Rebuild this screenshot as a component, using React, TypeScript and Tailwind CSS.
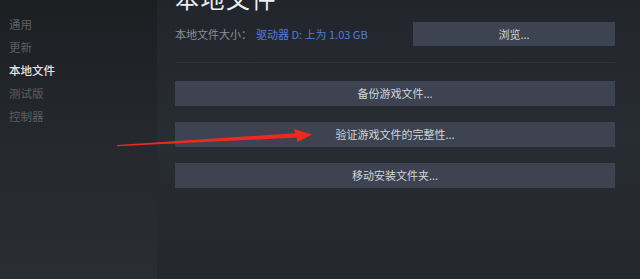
import React from "react";

const navItems = [
  { label: "通用", active: false },
  { label: "更新", active: false },
  { label: "本地文件", active: true },
  { label: "测试版", active: false },
  { label: "控制器", active: false },
];

const actions = ["备份游戏文件...", "验证游戏文件的完整性...", "移动安装文件夹..."];

const font = { fontFamily: '"Noto Sans CJK SC", "Noto Sans", sans-serif' };

function Arrow() {
  return (
    <svg className="absolute left-0 top-0 pointer-events-none" width="640" height="279" viewBox="0 0 640 279">
      <polygon
        points="117,145 295,133.2 294,129 312,134.6 297.5,142 296.5,137.6 117,146.2"
        fill="#ee2a1e"
      />
    </svg>
  );
}

export default function App() {
  return (
    <div className="relative flex w-[640px] h-[279px] overflow-hidden" style={font}>
      <aside className="w-[157px] shrink-0 pt-[13px] pl-[9px] bg-gradient-to-b from-[#1c1e22] via-[#25282d] to-[#2a2d32]">
        {navItems.map((item) => (
          <div
            key={item.label}
            className={`h-[23px] leading-[23px] text-[11.5px] ${
              item.active ? "text-[#e4e6e8] font-medium" : "text-[#5a5f66]"
            }`}
          >
            {item.label}
          </div>
        ))}
      </aside>

      <main className="flex-1 pl-[18px] pr-[25px] bg-gradient-to-b from-[#22252b] via-[#282c33] to-[#24272c]">
        <h1 className="-mt-[14px] text-[24px] leading-[24px] text-[#eceef0] tracking-[1.5px]">本地文件</h1>

        <div className="mt-[12px] flex items-center h-[24px]">
          <span className="text-[11px] text-[#8a9099]">本地文件大小：</span>
          <span className="ml-[4px] text-[11px] text-[#4f7fd8]">驱动器 D: 上为 1.03 GB</span>
          <button className="ml-auto w-[202px] h-[24px] bg-[#3d4350] text-[11px] text-[#d2d6db]">
            浏览...
          </button>
        </div>

        <div className="mt-[16px] border-t border-[#2f333a]" />

        <div className="mt-[18px] flex flex-col gap-[16px]">
          {actions.map((label) => (
            <button
              key={label}
              className="h-[25px] w-full bg-[#3d4350] text-[11px] text-[#d2d6db]"
            >
              {label}
            </button>
          ))}
        </div>
      </main>

      <Arrow />
    </div>
  );
}
